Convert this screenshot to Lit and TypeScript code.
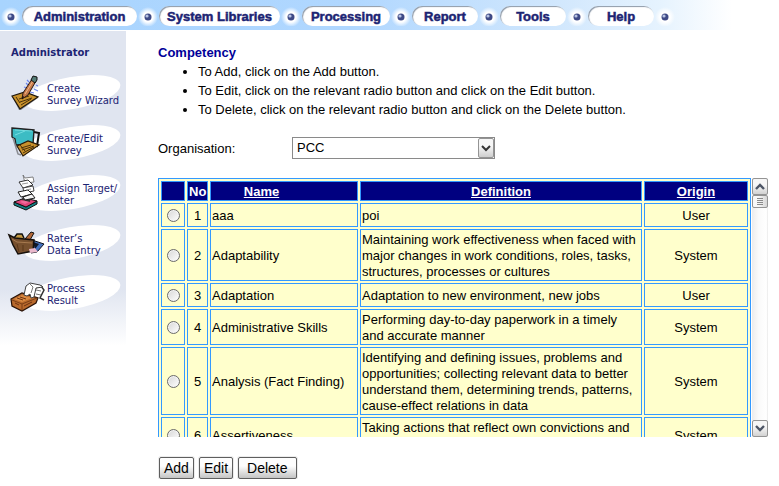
import { LitElement, html, css, svg } from "lit";
import { customElement, query } from "lit/decorators.js";

const menu = [
  { label: "Administration", width: 115 },
  { label: "System Libraries", width: 121 },
  { label: "Processing", width: 88 },
  { label: "Report", width: 66 },
  { label: "Tools", width: 66 },
  { label: "Help", width: 66 },
];

const tasks = [
  {
    lines: ["Create", "Survey Wizard"],
    icon: svg`
      <path d="M12 26 19 40 21 40 38 28 35 26 21 38Z" fill="#8a8c92"/>
      <path d="M12 26 25 22 38 27 20 39Z" fill="#c8912c" stroke="#1c150c" stroke-width="1.2"/>
      <path d="M16 27l4 6M19 29l10-3M20 32l12-4M21 35l10-6" stroke="#4a3109" fill="none"/>
      <path d="M26 13l2 2M24 17l3 1M30 22l4 1M34 19l4 2M27 10l2 2M36 15l2 1" stroke="#6c86f0" stroke-width="1.2"/>
      <path d="M22 29 23 23 32 9 36 11 28 25Z" fill="#c77a4a" stroke="#2a1a16"/>
      <path d="M25 24 33 11" stroke="#f1b98a"/>
      <path d="M31 10 33 6 37 7 37 10 35 13Z" fill="#567d77" stroke="#111"/>
      <path d="M22 29 23 26 24 27Z" fill="#000"/>`,
  },
  {
    lines: ["Create/Edit", "Survey"],
    icon: svg`
      <path d="M34 12 39 13 37 26 33 25" fill="none" stroke="#111" stroke-width="2"/>
      <path d="M12 8 34 10 33 24 16 25 15 19 12 17Z" fill="#3cbcc4" stroke="#222" stroke-width="1.4"/>
      <path d="M15 10 32 11M15 15 25 11" stroke="#74dce0"/>
      <path d="M13 18 18 34 21 35" fill="none" stroke="#8a8c92" stroke-width="1.5"/>
      <path d="M17 26 28 21 39 25 23 36Z" fill="#c8912c" stroke="#2a1b08" stroke-width="1.2"/>
      <path d="M21 28l10-3M22 30l12-4M23 33l11-6M20 25l5 6" stroke="#4a3109" fill="none"/>`,
  },
  {
    lines: ["Assign Target/", "Rater"],
    icon: svg`
      <path d="M14 32 26 37 37 31 37 34 26 40 14 35Z" fill="#127f83" stroke="#111"/>
      <path d="M14 32 25 28 37 31 26 37Z" fill="#e0457b" stroke="#111"/>
      <path d="M20 32l6-3 5 2-6 3z" fill="#f06b9b"/>
      <path d="M23 25l8 1-1 6-8-2z" fill="#333"/>
      <path d="M23 5 25 8 33 7 34 12 25 13Z" fill="#fff" stroke="#666" stroke-width=".8"/>
      <path d="M19 12 28 10 33 15 23 18Z" fill="#fff" stroke="#333"/>
      <path d="M23 18 33 16 34 21 24 23Z" fill="#fff" stroke="#444"/>
      <path d="M18 22 28 20 32 24 21 27Z" fill="#fff" stroke="#222"/>
      <path d="M23 27 32 24 35 28 25 30Z" fill="#f5f5f5" stroke="#222"/>
      <path d="M22 14l6-1M26 20l5-1" stroke="#999"/>`,
  },
  {
    lines: ["Rater’s", "Data Entry"],
    icon: svg`
      <path d="M14 18 17 14 22 14 24 18" fill="#c39a45" stroke="#111" stroke-width="1.5"/>
      <path d="M25 19 31 12 34 13 30 20Z" fill="#b56a3a" stroke="#111"/>
      <path d="M32 20 44 24 37 32 31 33Z" fill="#4472bf" stroke="#10131c"/>
      <path d="M33 22 39 24 35 29Z" fill="#101828"/>
      <path d="M9 15 15 18 34 20 33 31 18 34 13 25Z" fill="#77502e" stroke="#16100b" stroke-width="1.5"/>
      <path d="M12 19 17 22 32 23" fill="none" stroke="#a77a50"/>
      <path d="M17 24 19 32M23 25 23 31" stroke="#5a3719"/>
      <path d="M29 29 35 28 38 32 30 33Z" fill="#e9b8cb"/>`,
  },
  {
    lines: ["Process", "Result"],
    icon: svg`
      <path d="M35 18 41 16 44 20 40 28 44 30" fill="#fff" stroke="#333" stroke-width="1.5"/>
      <path d="M11 29 22 23 38 28 36 33 22 41 12 36Z" fill="#b8692c" stroke="#2a1307" stroke-width="1.2"/>
      <path d="M12 30 22 34 37 28M22 34 22 40" fill="none" stroke="#7a3f16"/>
      <path d="M14 29 22 25 32 28 22 32Z" fill="#d98a42"/>
      <path d="M17 28l6 2M20 27l6 2M15 33l4 2M24 36l8-4" stroke="#6d3210"/>
      <path d="M24 25 26 16 30 13 40 15 43 17 36 18 34 27 31 28 30 24 27 26Z" fill="#fff" stroke="#444"/>
      <path d="M30 14 33 17 31 23M36 20 41 21M36 24 41 25" fill="none" stroke="#777"/>`,
  },
];

const rows = [
  { name: "aaa", definition: "poi", origin: "User" },
  {
    name: "Adaptability",
    definition:
      "Maintaining work effectiveness when faced with major changes in work conditions, roles, tasks, structures, processes or cultures",
    origin: "System",
  },
  { name: "Adaptation", definition: "Adaptation to new environment, new jobs", origin: "User" },
  {
    name: "Administrative Skills",
    definition: "Performing day-to-day paperwork in a timely and accurate manner",
    origin: "System",
  },
  {
    name: "Analysis (Fact Finding)",
    definition:
      "Identifying and defining issues, problems and opportunities; collecting relevant data to better understand them, determining trends, patterns, cause-effect relations in data",
    origin: "System",
  },
  { name: "Assertiveness", definition: "Taking actions that reflect own convictions and", origin: "System" },
];

@customElement("top-menu")
class TopMenu extends LitElement {
  static styles = css`
    :host {
      display: block;
    }
    nav {
      display: flex;
      align-items: center;
      height: 30px;
      padding-top: 1px;
      box-sizing: border-box;
      background: linear-gradient(90deg, #a8d4fe 0, #b0d7ff 45%, #cfe6fd 70%, #e6f3fe 85%, #fff 94%);
    }
    .dot {
      flex: none;
      width: 22px;
      height: 20px;
      background: radial-gradient(circle at 11px 11px, #fff 5px, #fff0 10px);
    }
    .pill {
      flex: none;
      box-sizing: border-box;
      height: 20px;
      border-radius: 10px;
      background: #fff;
      box-shadow: inset 1px 1px 1px #8d99a8;
      color: #1c2473;
      font: bold 13px/21px "Liberation Sans", Arial, sans-serif;
      text-align: center;
      text-decoration: none;
      white-space: nowrap;
      -webkit-text-stroke: 0.5px #1c2473;
    }
  `;

  dot() {
    return html`<svg class="dot" viewBox="0 0 22 20" aria-hidden="true">
      <circle cx="11" cy="11" r="3.5" fill="#3f4a86" />
      <circle cx="10" cy="10" r="1.6" fill="#b8c4e4" />
    </svg>`;
  }

  render() {
    return html`<nav>
      ${this.dot()}
      ${menu.map(
        (m) => html`<a class="pill" href="#" style="width:${m.width}px">${m.label}</a>${this.dot()}`,
      )}
    </nav>`;
  }
}

@customElement("task-bar")
class TaskBar extends LitElement {
  static styles = css`
    :host {
      display: block;
      font: 10px/12px "DejaVu Sans", sans-serif;
      color: #1c2473;
    }
    aside {
      height: 315px;
      background: linear-gradient(#e0e5f0 0, #e0e5f0 82%, #fff 100%);
    }
    h2 {
      margin: 0;
      padding: 16px 0 11px 11px;
      font: bold 10px/12px "DejaVu Sans", sans-serif;
    }
    .task {
      display: grid;
      height: 50px;
      color: inherit;
      text-decoration: none;
      white-space: nowrap;
    }
    .task > * {
      grid-area: 1 / 1;
    }
    .label {
      padding: 13px 0 0 47px;
    }
    .line {
      display: block;
    }
  `;

  render() {
    return html`<aside>
      <h2>Administrator</h2>
      ${tasks.map(
        (t) => html`<a class="task" href="#">
          <svg width="126" height="50" viewBox="0 0 126 50" aria-hidden="true">
            <ellipse cx="72" cy="23" rx="49" ry="16" transform="rotate(-10 72 23)" fill="#fff" />
            ${t.icon}
          </svg>
          <span class="label">${t.lines.map((l) => html`<span class="line">${l}</span>`)}</span>
        </a>`,
      )}
    </aside>`;
  }
}

@customElement("competency-list")
class CompetencyList extends LitElement {
  @query(".scroller") scroller!: HTMLElement;

  static styles = css`
    :host {
      display: flex;
      gap: 1px;
      height: 259px;
    }
    .scroller {
      flex: 1;
      overflow: auto;
      scrollbar-width: none;
    }
    table {
      width: 100%;
      table-layout: fixed;
      border: 1px solid #3399ff;
      border-collapse: separate;
      border-spacing: 2px;
      background: #ffffcc;
      font: 13px/16px "Liberation Sans", Arial, sans-serif;
      color: #000;
    }
    th,
    td {
      box-sizing: border-box;
      padding: 2px 1px 0;
      border: 1px solid #3399ff;
      text-align: left;
    }
    th {
      background: #000080;
      color: #fff;
      text-align: center;
    }
    th a {
      color: #fff;
    }
    .pick {
      width: 24px;
    }
    .no {
      width: 21px;
    }
    .name {
      width: 148px;
    }
    .origin {
      width: 104px;
    }
    th.name {
      padding-right: 46px;
    }
    td.no,
    td.origin {
      text-align: center;
    }
    .last td {
      height: 36px;
    }
    .last .definition {
      vertical-align: top;
    }
    input {
      display: block;
      appearance: none;
      box-sizing: border-box;
      width: 13px;
      height: 13px;
      margin: 3px auto 4px;
      border: 1px solid #6b6b6b;
      border-radius: 50%;
      background: linear-gradient(135deg, #d6d6d6, #fff);
      box-shadow: inset 0 0 0 1px #f4f4f4;
    }
    input:checked {
      background: radial-gradient(#1b3c78 3px, #eee 4px);
    }
    .bar {
      display: flex;
      flex-direction: column;
      width: 16px;
      box-sizing: border-box;
      background: linear-gradient(90deg, #ececec, #fafafa 40%, #fff 90%, #e8e8e8);
    }
    .bar button {
      display: grid;
      place-items: center;
      height: 17px;
      padding: 0;
      border: 1px solid #949494;
      border-radius: 2px;
      background: linear-gradient(#f6f6f6 40%, #d2d2d2);
    }
    .track {
      flex: 1;
    }
    .thumb {
      display: grid;
      place-items: center;
      box-sizing: border-box;
      height: 13px;
      border: 1px solid #949494;
      border-radius: 2px;
      background: linear-gradient(90deg, #f8f8f8 40%, #d6d6d6);
    }
  `;

  scrollRows(by: number) {
    this.scroller.scrollBy({ top: by });
  }

  render() {
    return html`
      <div class="scroller">
        <table>
          <thead>
            <tr>
              <th class="pick"></th>
              <th class="no">No</th>
              <th class="name"><a href="#">Name</a></th>
              <th class="definition"><a href="#">Definition</a></th>
              <th class="origin"><a href="#">Origin</a></th>
            </tr>
          </thead>
          <tbody>
            ${rows.map(
              (r, i) => html`<tr class=${i === rows.length - 1 ? "last" : ""}>
                <td class="pick"><input type="radio" name="competency" aria-labelledby="name-${i}" /></td>
                <td class="no">${i + 1}</td>
                <td class="name" id="name-${i}">${r.name}</td>
                <td class="definition">${r.definition}</td>
                <td class="origin">${r.origin}</td>
              </tr>`,
            )}
          </tbody>
        </table>
      </div>
      <div class="bar">
        <button aria-label="Scroll up" @click=${() => this.scrollRows(-40)}>
          <svg width="10" height="7" viewBox="0 0 10 7"><path d="M1 6 5 2 9 6" fill="none" stroke="#4d5565" stroke-width="2.4" /></svg>
        </button>
        <div class="track">
          <div class="thumb">
            <svg width="6" height="8" viewBox="0 0 6 8"><path d="M0 .5H6M0 2.5H6M0 4.5H6M0 6.5H6" stroke="#8a8a8a" /></svg>
          </div>
        </div>
        <button aria-label="Scroll down" @click=${() => this.scrollRows(40)}>
          <svg width="10" height="7" viewBox="0 0 10 7"><path d="M1 1 5 5 9 1" fill="none" stroke="#4d5565" stroke-width="2.4" /></svg>
        </button>
      </div>
    `;
  }
}

@customElement("app-root")
class AppRoot extends LitElement {
  static styles = css`
    :host {
      display: block;
      background: #fff;
      color: #000;
      font: 13px/19px "Liberation Sans", Arial, sans-serif;
    }
    .page {
      display: grid;
      grid-template-columns: 126px minmax(0, 1fr);
      column-gap: 32px;
      padding: 1px 11px 0 0;
    }
    h1 {
      margin: 0;
      padding-top: 13px;
      color: #000099;
      font-size: 13px;
      line-height: 18px;
    }
    ul {
      margin: 0;
      padding-left: 40px;
    }
    .filter {
      display: flex;
      align-items: center;
      margin: 18px 0 19px;
    }
    .filter label {
      width: 134px;
    }
    .drop {
      position: relative;
      display: flex;
      width: 203px;
    }
    select {
      appearance: none;
      width: 100%;
      height: 22px;
      padding: 0 20px 0 4px;
      border: 1px solid #8a8a8a;
      border-radius: 0;
      background: #fff;
      color: #000;
      font: 13px/18px "Liberation Sans", Arial, sans-serif;
    }
    .arrow {
      position: absolute;
      top: 1px;
      right: 1px;
      bottom: 1px;
      display: grid;
      place-items: center;
      width: 16px;
      box-sizing: border-box;
      border: 1px solid #949494;
      border-radius: 2px;
      background: linear-gradient(#f6f6f6 40%, #cecece);
      pointer-events: none;
    }
    .actions {
      display: flex;
      gap: 5px;
      padding: 20px 0 0 1px;
    }
    .actions button {
      height: 22px;
      padding: 0 4px;
      border: 1px solid #5e5e5e;
      border-radius: 2px;
      background: linear-gradient(#fdfdfd 40%, #c4c4c4);
      box-shadow: 0 0 0 1px #ececec;
      color: #000;
      font: 14px/20px "Liberation Sans", Arial, sans-serif;
    }
    .actions .wide {
      padding: 0 8px;
    }
  `;

  render() {
    return html`
      <top-menu></top-menu>
      <div class="page">
        <task-bar></task-bar>
        <main>
          <h1>Competency</h1>
          <ul>
            <li>To Add, click on the Add button.</li>
            <li>To Edit, click on the relevant radio button and click on the Edit button.</li>
            <li>To Delete, click on the relevant radio button and click on the Delete button.</li>
          </ul>
          <div class="filter">
            <label for="organisation">Organisation:</label>
            <div class="drop">
              <select id="organisation">
                <option>PCC</option>
              </select>
              <span class="arrow" aria-hidden="true">
                <svg width="10" height="7" viewBox="0 0 10 7"><path d="M1 1 5 5 9 1" fill="none" stroke="#333" stroke-width="2" /></svg>
              </span>
            </div>
          </div>
          <competency-list></competency-list>
          <div class="actions">
            <button>Add</button>
            <button>Edit</button>
            <button class="wide">Delete</button>
          </div>
        </main>
      </div>
    `;
  }
}
